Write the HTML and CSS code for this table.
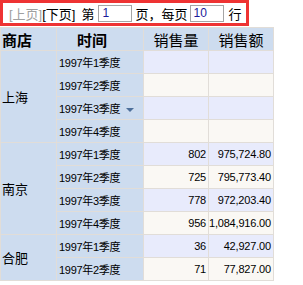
FILE: index.html
```html
<!DOCTYPE html>
<html>
<head>
<meta charset="utf-8">
<link rel="stylesheet" href="styles.css">
</head>
<body>
<div class="pager">
  <span class="link disabled">[上页]</span><span class="link">[下页]</span>
  <span class="lbl lbl-first">第</span>
  <span class="inp inp-page">1</span>
  <span class="lbl lbl-mid">页，每页</span>
  <span class="inp inp-size">10</span>
  <span class="lbl lbl-last">行</span>
</div>
<table class="grid">
  <thead>
    <tr>
      <th class="c-store hd-bold">商店</th>
      <th class="c-time hd-bold">时间</th>
      <th class="c-qty">销售量</th>
      <th class="c-amt">销售额</th>
    </tr>
  </thead>
  <tbody>
    <tr class="odd"><td class="rh store" rowspan="4">上海</td><td class="rh">1997年1季度</td><td class="num"></td><td class="num"></td></tr>
    <tr class="even"><td class="rh">1997年2季度</td><td class="num"></td><td class="num"></td></tr>
    <tr class="odd"><td class="rh">1997年3季度 <span class="drop"></span></td><td class="num"></td><td class="num"></td></tr>
    <tr class="even"><td class="rh">1997年4季度</td><td class="num"></td><td class="num"></td></tr>
    <tr class="odd"><td class="rh store" rowspan="4">南京</td><td class="rh">1997年1季度</td><td class="num">802</td><td class="num">975,724.80</td></tr>
    <tr class="even"><td class="rh">1997年2季度</td><td class="num">725</td><td class="num">795,773.40</td></tr>
    <tr class="odd"><td class="rh">1997年3季度</td><td class="num">778</td><td class="num">972,203.40</td></tr>
    <tr class="even"><td class="rh">1997年4季度</td><td class="num">956</td><td class="num">1,084,916.00</td></tr>
    <tr class="odd"><td class="rh store" rowspan="2">合肥</td><td class="rh">1997年1季度</td><td class="num">36</td><td class="num">42,927.00</td></tr>
    <tr class="even"><td class="rh">1997年2季度</td><td class="num">71</td><td class="num">77,827.00</td></tr>
  </tbody>
</table>
</body>
</html>
```
FILE: styles.css
```css
html, body {
  margin: 0;
  padding: 0;
  background: #ffffff;
  font-family: "Liberation Sans", "Noto Sans CJK SC", sans-serif;
  font-size: 11px;
  color: #000;
}
.pager {
  display: inline-flex;
  align-items: center;
  height: 20px;
  padding: 0 4px 0 6px;
  border: 3px solid #ee3333;
  white-space: nowrap;
  font-size: 13px;
}
.link { color: #000; }
.link.disabled { color: #a0a0a0; }
.lbl-first { margin-left: 6px; }
.lbl-mid { margin-left: 3px; }
.lbl-last { margin-left: 5px; }
.inp {
  display: inline-block;
  box-sizing: border-box;
  height: 17px;
  line-height: 15px;
  border: 1px solid #a5a5a5;
  padding: 0 3px;
  color: #1a1a9a;
  font-size: 12px;
  width: 34px;
}
.inp-page { margin-left: 4px; }
.inp-size { margin-left: 2px; }
.grid {
  border-collapse: collapse;
  margin-top: 1px;
}
.grid th, .grid td {
  border: 1px solid #e1ddd8;
  height: 22px;
  padding: 0;
  white-space: nowrap;
}
.grid th {
  background: #cddcef;
  font-size: 15px;
  font-weight: normal;
  text-align: center;
}
.grid th.hd-bold { font-weight: bold; }
.grid th.c-store { text-align: left; width: 54px; padding-left: 1px; }
.grid th.c-time { width: 66px; text-align: left; padding-left: 20px; }
.grid th.c-qty { width: 64px; }
.grid th.c-amt { width: 63px; }
.grid td.rh {
  background: #cddcef;
  padding-left: 2px;
  text-align: left;
  letter-spacing: -0.3px;
}
.grid td.store { padding-left: 1px; font-size: 13px; letter-spacing: 0; }
.grid td.num {
  text-align: right;
  padding-right: 2px;
  letter-spacing: -0.2px;
}
.grid tr.odd td.num { background: #e8ebfc; }
.grid tr.even td.num { background: #faf8f4; }
.drop {
  display: inline-block;
  width: 0;
  height: 0;
  border-left: 4px solid transparent;
  border-right: 4px solid transparent;
  border-top: 4px solid #4d6f9a;
  vertical-align: middle;
  margin-left: 3px;
}
```
